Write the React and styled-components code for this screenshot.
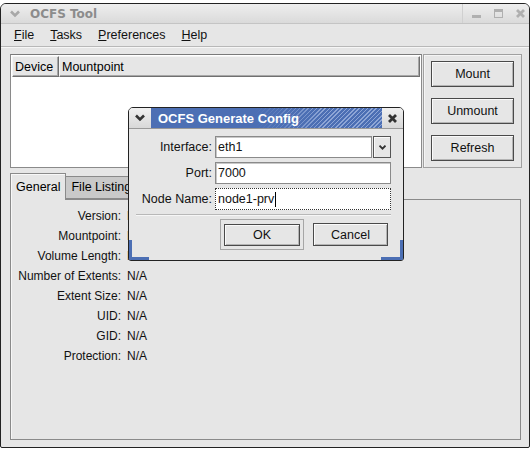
import React from "react";
import styled, { createGlobalStyle } from "styled-components";

const GlobalStyle = createGlobalStyle`
  html, body {
    margin: 0;
    padding: 0;
    background: #ffffff;
  }
  body {
    font-family: "Liberation Sans", Arial, sans-serif;
    font-size: 12.5px;
    color: #000;
  }
`;

const Chevron = ({ color = "#888", size = 12 }) => (
  <svg width={size} height={size} viewBox="0 0 12 12">
    <path d="M2 3.5 L6 7.5 L10 3.5" fill="none" stroke={color} strokeWidth="2.6" />
  </svg>
);

const CloseX = ({ color = "#aaa", size = 11 }) => (
  <svg width={size} height={size} viewBox="0 0 11 11">
    <path d="M2 2 L9 9 M9 2 L2 9" stroke={color} strokeWidth="2.8" />
  </svg>
);

const MinIcon = () => (
  <svg width="11" height="11" viewBox="0 0 11 11">
    <rect x="1" y="7" width="9" height="3" fill="#b0b0b0" />
  </svg>
);

const MaxIcon = () => (
  <svg width="11" height="11" viewBox="0 0 11 11">
    <rect x="1.5" y="1.5" width="8" height="8" fill="none" stroke="#b0b0b0" strokeWidth="1" />
    <rect x="1" y="1" width="9" height="3" fill="#b0b0b0" />
  </svg>
);

const Screen = styled.div`
  position: relative;
  width: 530px;
  height: 450px;
  overflow: hidden;
  background: #fff;
`;

const MainWindow = styled.div`
  margin-top: 3px;
  height: 445px;
  box-sizing: border-box;
  border: 1px solid #222;
  border-radius: 6px 6px 2px 2px;
  background: #e6e6e6;
  display: flex;
  flex-direction: column;
`;

const TitleBar = styled.div`
  box-sizing: border-box;
  height: 20px;
  display: flex;
  align-items: center;
  padding: 0 3px 0 8px;
  background: linear-gradient(#eeeeee, #dadada);
  border-bottom: 1px solid #c4c4c4;
  border-radius: 5px 5px 0 0;
  gap: 9px;
`;

const Title = styled.span`
  font-family: "DejaVu Sans", "Liberation Sans", sans-serif;
  font-weight: bold;
  font-size: 12px;
  color: #8c8c8c;
  flex: 1;
`;

const DialogTitleText = styled.span`
  font-family: "Liberation Sans", Arial, sans-serif;
  font-weight: bold;
  font-size: 13px;
  color: #fff;
`;

const WinButtons = styled.div`
  display: flex;
  align-items: center;
  gap: 11px;
  padding-left: 8px;
  height: 100%;
  border-left: 1px solid #d0d0d0;
`;

const MenuBar = styled.div`
  height: 22px;
  display: flex;
  align-items: center;
  padding-left: 5px;
  border-bottom: 1px solid #b8b8b8;
  box-shadow: 0 1px 0 #f6f6f6;
`;

const MenuItem = styled.span`
  padding: 0 8px;
  color: #111;
  u {
    text-decoration: underline;
  }
`;

const Upper = styled.div`
  display: flex;
  padding: 7px 7px 0 9px;
  gap: 1px;
`;

const ListBox = styled.div`
  width: 412px;
  height: 114px;
  box-sizing: border-box;
  border: 1px solid #8a8a8a;
  border-top-color: #7a7a7a;
  background: #fff;
  padding: 1px;
`;

const ListHeader = styled.div`
  display: flex;
  height: 21px;
`;

const HeaderCell = styled.div`
  box-sizing: border-box;
  width: ${(p) => p.$w};
  flex: ${(p) => (p.$grow ? 1 : "none")};
  background: #e6e6e6;
  border: 1px solid #707070;
  border-top-color: #f4f4f4;
  border-left-color: #f4f4f4;
  box-shadow: inset -1px -1px 0 #a8a8a8;
  display: flex;
  align-items: center;
  padding-left: 2px;
`;

const ButtonFrame = styled.div`
  width: 99px;
  height: 114px;
  box-sizing: border-box;
  border: 1px solid #a0a0a0;
  box-shadow: inset 1px 1px 0 #f4f4f4;
  display: flex;
  flex-direction: column;
  align-items: center;
  padding-top: 6px;
  gap: 11px;
`;

const Button = styled.div`
  box-sizing: border-box;
  width: ${(p) => p.$w || "83px"};
  height: ${(p) => p.$h || "26px"};
  border: 1px solid #4a4a4a;
  background: #e6e6e6;
  box-shadow: inset 1px 1px 0 #fafafa, inset -1px -1px 0 #b4b4b4;
  display: flex;
  align-items: center;
  justify-content: center;
  color: #111;
`;

const Notebook = styled.div`
  flex: 1;
  display: flex;
  flex-direction: column;
  padding: 6px 8px 7px 9px;
`;

const Tabs = styled.div`
  display: flex;
  align-items: flex-end;
  height: 25px;
`;

const Tab = styled.div`
  box-sizing: border-box;
  height: ${(p) => (p.$active ? "27px" : "23px")};
  margin-bottom: ${(p) => (p.$active ? "-1px" : "0")};
  padding: 0 5px 1px;
  display: flex;
  align-items: center;
  background: ${(p) => (p.$active ? "#e6e6e6" : "#c9c9c9")};
  border: 1px solid #8a8a8a;
  border-bottom: ${(p) => (p.$active ? "none" : "1px solid #8a8a8a")};
  border-left: ${(p) => (p.$active ? "1px solid #8a8a8a" : "none")};
  box-shadow: ${(p) => (p.$active ? "inset 1px 1px 0 #f8f8f8" : "none")};
  position: relative;
  z-index: ${(p) => (p.$active ? 1 : 0)};
`;

const Panel = styled.div`
  flex: 1;
  border: 1px solid #8a8a8a;
  box-shadow: inset 1px 0 0 #f6f6f6;
  padding: 8px 0 0 0;
  display: grid;
  grid-template-columns: 110px 1fr;
  grid-auto-rows: 20px;
  column-gap: 6px;
  align-content: start;
  font-size: 12px;
`;

const Label = styled.div`
  text-align: right;
  line-height: 16px;
  color: #111;
`;

const Value = styled.div`
  line-height: 16px;
  color: #111;
`;

const Dialog = styled.div`
  position: absolute;
  left: 128px;
  top: 107px;
  width: 276px;
  height: 154px;
  box-sizing: border-box;
  border: 1px solid #222;
  border-radius: 5px 5px 3px 3px;
  background: #e6e6e6;
  display: flex;
  flex-direction: column;
  overflow: hidden;
`;

const DialogTitle = styled.div`
  height: 20px;
  display: flex;
  align-items: stretch;
  border-bottom: 1px solid #999;
`;

const TitleButton = styled.div`
  width: ${(p) => p.$w};
  display: flex;
  align-items: center;
  justify-content: center;
  background: linear-gradient(#f0f0f0, #d8d8d8);
`;

const BlueBar = styled.div`
  flex: 1;
  display: flex;
  align-items: center;
  padding-left: 7px;
  background:
    linear-gradient(to right, #4c6fb4 0%, #4c6fb4 45%, rgba(76, 111, 180, 0) 75%),
    repeating-linear-gradient(135deg, #8ea6d6 0 1px, #4c6fb4 1px 3px),
    #4c6fb4;
`;

const DialogBody = styled.div`
  flex: 1;
  position: relative;
  padding: 7px 12px 0 0;
  display: flex;
  flex-direction: column;
`;

const FieldRow = styled.div`
  display: flex;
  align-items: center;
  height: 22px;
  margin-bottom: 4px;
`;

const FieldLabel = styled.div`
  width: 83px;
  text-align: right;
  padding-right: 3px;
  color: #111;
`;

const Entry = styled.div`
  box-sizing: border-box;
  flex: 1;
  height: 22px;
  background: #fff;
  border: 1px ${(p) => (p.$focus ? "dotted #333" : "solid #8a8a8a")};
  box-shadow: ${(p) => (p.$focus ? "inset 0 0 0 1px #fff" : "inset 1px 1px 0 #c8c8c8")};
  display: flex;
  align-items: center;
  padding-left: 2px;
  color: #111;
`;

const Caret = styled.span`
  display: inline-block;
  width: 1px;
  height: 15px;
  background: #000;
  margin-left: 1px;
`;

const ComboButton = styled.div`
  box-sizing: border-box;
  width: 18px;
  height: 22px;
  margin-left: 1px;
  border: 1px solid #555;
  background: #e6e6e6;
  box-shadow: inset 1px 1px 0 #fafafa;
  display: flex;
  align-items: center;
  justify-content: center;
`;

const Separator = styled.div`
  margin: 0 0 0 7px;
  height: 0;
  border-top: 1px solid #b8b8b8;
  border-bottom: 1px solid #f6f6f6;
`;

const ButtonRow = styled.div`
  display: flex;
  align-items: center;
  justify-content: flex-end;
  gap: 9px;
  padding: 3px 3px 0 0;
`;

const FocusFrame = styled.div`
  box-sizing: border-box;
  width: 84px;
  height: 31px;
  border: 1px solid #a6a6a6;
  display: flex;
  align-items: center;
  justify-content: center;
`;

const BlueCorner = styled.div`
  position: absolute;
  bottom: 0;
  ${(p) => (p.$side === "left" ? "left: 0;" : "right: 0;")}
  width: ${(p) => p.$w};
  height: 20px;
  border-bottom: 3px solid #4c6fb4;
  ${(p) => (p.$side === "left" ? "border-left" : "border-right")}: 3px solid #4c6fb4;
  box-sizing: border-box;
`;

const info = [
  ["Version:", "N/A"],
  ["Mountpoint:", "N/A"],
  ["Volume Length:", "N/A"],
  ["Number of Extents:", "N/A"],
  ["Extent Size:", "N/A"],
  ["UID:", "N/A"],
  ["GID:", "N/A"],
  ["Protection:", "N/A"],
];

export default function App() {
  return (
    <>
      <GlobalStyle />
      <Screen>
        <MainWindow>
          <TitleBar>
            <Chevron color="#a8a8a8" />
            <Title>OCFS Tool</Title>
            <WinButtons>
              <MinIcon />
              <MaxIcon />
              <CloseX color="#b0b0b0" />
            </WinButtons>
          </TitleBar>
          <MenuBar>
            <MenuItem><u>F</u>ile</MenuItem>
            <MenuItem><u>T</u>asks</MenuItem>
            <MenuItem><u>P</u>references</MenuItem>
            <MenuItem><u>H</u>elp</MenuItem>
          </MenuBar>
          <Upper>
            <ListBox>
              <ListHeader>
                <HeaderCell $w="47px">Device</HeaderCell>
                <HeaderCell $grow>Mountpoint</HeaderCell>
              </ListHeader>
            </ListBox>
            <ButtonFrame>
              <Button>Mount</Button>
              <Button>Unmount</Button>
              <Button>Refresh</Button>
            </ButtonFrame>
          </Upper>
          <Notebook>
            <Tabs>
              <Tab $active>General</Tab>
              <Tab>File Listing</Tab>
            </Tabs>
            <Panel>
              {info.map(([k, v]) => (
                <React.Fragment key={k}>
                  <Label>{k}</Label>
                  <Value>{v}</Value>
                </React.Fragment>
              ))}
            </Panel>
          </Notebook>
        </MainWindow>

        <Dialog>
          <DialogTitle>
            <TitleButton $w="22px">
              <Chevron color="#333" />
            </TitleButton>
            <BlueBar>
              <DialogTitleText>OCFS Generate Config</DialogTitleText>
            </BlueBar>
            <TitleButton $w="21px">
              <CloseX color="#333" />
            </TitleButton>
          </DialogTitle>
          <DialogBody>
            <FieldRow>
              <FieldLabel>Interface:</FieldLabel>
              <Entry>eth1</Entry>
              <ComboButton>
                <Chevron color="#333" size={9} />
              </ComboButton>
            </FieldRow>
            <FieldRow>
              <FieldLabel>Port:</FieldLabel>
              <Entry>7000</Entry>
            </FieldRow>
            <FieldRow>
              <FieldLabel>Node Name:</FieldLabel>
              <Entry $focus>
                node1-prv<Caret />
              </Entry>
            </FieldRow>
            <Separator />
            <ButtonRow>
              <FocusFrame>
                <Button $w="76px" $h="22px">OK</Button>
              </FocusFrame>
              <Button $w="75px" $h="23px">Cancel</Button>
            </ButtonRow>
            <BlueCorner $side="left" $w="20px" />
            <BlueCorner $side="right" $w="22px" />
          </DialogBody>
        </Dialog>
      </Screen>
    </>
  );
}
